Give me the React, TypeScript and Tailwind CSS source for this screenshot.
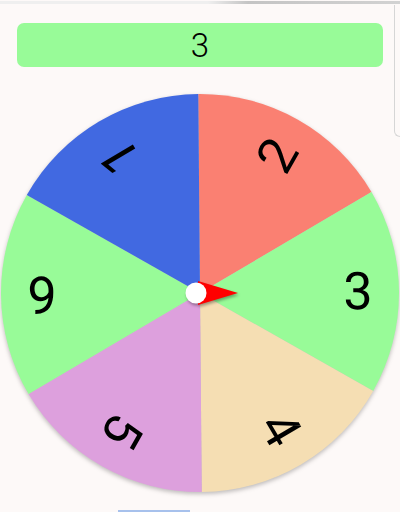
import React from 'react';

const CX = 200;
const CY = 293;
const R = 199;

interface Segment {
  label: string;
  color: string;
  angle: number;
}

// angle = centre of the slice, degrees clockwise from east
const segments: Segment[] = [
  { label: '2', color: '#fa8072', angle: -60 },
  { label: '3', color: '#98fb98', angle: 0 },
  { label: '4', color: '#f5deb3', angle: 60 },
  { label: '5', color: '#dda0dd', angle: 120 },
  { label: '6', color: '#98fb98', angle: 180 },
  { label: '1', color: '#4169e1', angle: 240 },
];

const pt = (deg: number, r: number) => {
  const a = (deg * Math.PI) / 180;
  return [CX + r * Math.cos(a), CY + r * Math.sin(a)];
};

const slicePath = (a0: number, a1: number) => {
  const [x0, y0] = pt(a0, R);
  const [x1, y1] = pt(a1, R);
  return `M ${CX} ${CY} L ${x0} ${y0} A ${R} ${R} 0 0 1 ${x1} ${y1} Z`;
};

const Wheel: React.FC = () => (
  <svg
    className="block mt-[21px] drop-shadow-[0_2px_2px_rgba(0,0,0,0.25)]"
    width={400}
    height={412}
    viewBox="0 88 400 412"
  >
    <g transform={`rotate(-0.5 ${CX} ${CY})`}>
      {segments.map((s) => (
        <path key={s.label} d={slicePath(s.angle - 30, s.angle + 30)} fill={s.color} />
      ))}
      {segments.map((s) => {
        const [x, y] = pt(s.angle, 158);
        return (
          <text
            key={'t' + s.label}
            transform={`translate(${x} ${y}) rotate(${s.angle})`}
            textAnchor="middle"
            dominantBaseline="central"
            fontFamily="Roboto, 'Liberation Sans', Arial, sans-serif"
            fontSize={52}
            fill="#000"
          >
            {s.label}
          </text>
        );
      })}
    </g>
    <g style={{ filter: 'drop-shadow(1px 2px 1.5px rgba(0,0,0,0.35))' }}>
      <polygon points="198,281 238,293 198,305" fill="#ff0000" />
      <circle cx={196} cy={293} r={10.5} fill="#ffffff" />
    </g>
  </svg>
);

const App: React.FC = () => {
  return (
    <div className="relative w-[400px] h-[512px] overflow-hidden bg-[#fdf9f8] font-['Liberation_Sans',Arial,sans-serif]">
      <div className="h-[5px] pt-[1px]">
        <div className="h-[3px] bg-linear-to-r from-[#efefef] from-52% via-[#c4c4c4] via-62% to-[#d2d2d2]" />
      </div>

      <div className="mx-[17px] mt-[18px] h-[44px] rounded-[7px] bg-[#98fb98] flex items-center justify-center font-['Roboto',sans-serif] font-light text-[33px] leading-none text-black">
        3
      </div>

      <Wheel />

      <div className="mt-[10px] ml-[118px] w-[72px] h-[2px] bg-[#a7c1ec]" />

      <div className="absolute right-0 top-[5px] w-[6px] h-[132px] border-l border-b border-[#d6d6d6] rounded-bl-[6px]" />
    </div>
  );
};

export default App;
